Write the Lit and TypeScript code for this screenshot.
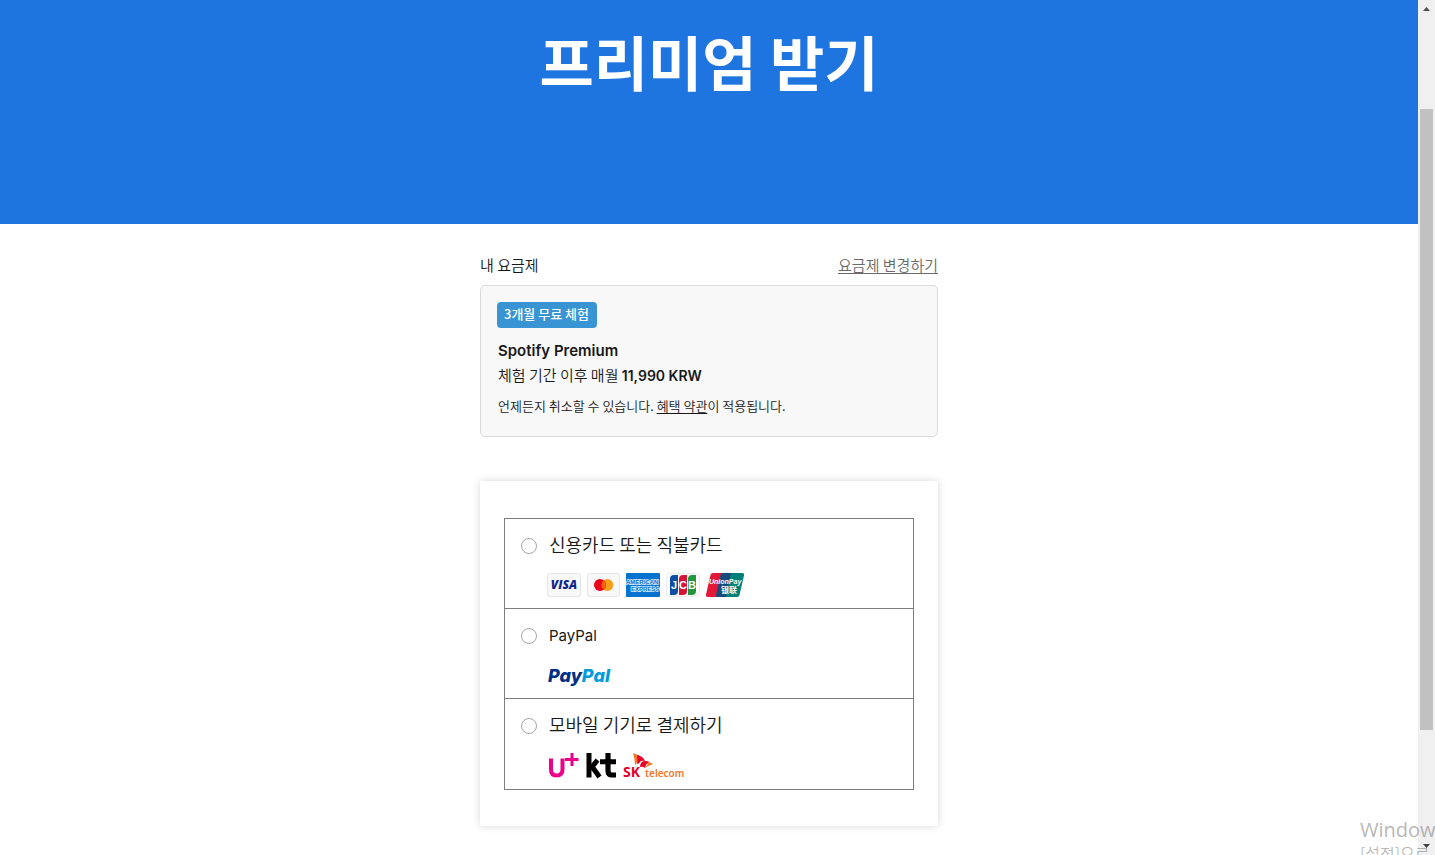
import { LitElement, html, css, svg } from "lit";
import { customElement, state } from "lit/decorators.js";

const visa = svg`<svg width="34" height="24" viewBox="0 0 34 24" role="img" aria-label="Visa">
  <rect x=".5" y=".5" width="33" height="23" rx="2" fill="#f8f8f9" stroke="#e6e6e8"/>
  <text x="17" y="16" text-anchor="middle" font-family="Open Sans, sans-serif" font-size="12" font-weight="800" font-style="italic" fill="#10268c">VISA</text>
</svg>`;

const mastercard = svg`<svg width="33" height="24" viewBox="0 0 33 24" role="img" aria-label="Mastercard">
  <rect x=".5" y=".5" width="32" height="23" rx="2" fill="#f8f8f9" stroke="#e6e6e8"/>
  <circle cx="20.300" cy="12" r="6" fill="#f9a01b"/>
  <circle cx="13" cy="12" r="6" fill="#eb001b"/>
  <path d="M16.650 7.250a6 6 0 0 1 0 9.500a6 6 0 0 1 0-9.500z" fill="#ff5f00"/>
</svg>`;

const amex = svg`<svg width="34" height="24" viewBox="0 0 34 24" role="img" aria-label="American Express">
  <rect width="34" height="24" rx="1" fill="#0672cf"/>
  <g font-family="Liberation Sans, sans-serif" font-weight="700" font-size="6" fill="#0672cf" stroke="#d9eafa" stroke-width="1.500" paint-order="stroke">
    <text x="0" y="11">AMERICAN</text>
    <text x="5" y="18">EXPRESS</text>
  </g>
</svg>`;

const jcb = svg`<svg width="34" height="24" viewBox="0 0 34 24" role="img" aria-label="JCB">
  <rect x=".5" y=".5" width="33" height="23" rx="2" fill="#fbfbfb" stroke="#ececee"/>
  <path d="M8 2h4v16q0 4-4 4H4V6q0-4 4-4z" fill="#0b4ea2"/>
  <path d="M17 2h4v16q0 4-4 4h-4V6q0-4 4-4z" fill="#d7133a"/>
  <path d="M26 2h4v16q0 4-4 4h-4V6q0-4 4-4z" fill="#22963c"/>
  <g font-family="Liberation Sans, sans-serif" font-size="11" font-weight="700" fill="#fff">
    <text x="5" y="16">J</text><text x="13" y="16">C</text><text x="22" y="16">B</text>
  </g>
</svg>`;

const unionPay = svg`<svg width="38" height="24" viewBox="0 0 38 24" role="img" aria-label="UnionPay">
  <path d="M7 0h11l-5 24H2q-2.500 0-2-2.500L4.500 2Q5 0 7 0z" fill="#e21836"/>
  <path d="M17 0h11l-5 24H11q-1.500 0-1-2.500L14.500 2Q15 0 17 0z" fill="#1a4a7c"/>
  <path d="M27 0h9q2.500 0 2 2.500L33.500 22q-.5 2-2.500 2H21q-1.500 0-1-2.500L24.500 2Q25 0 27 0z" fill="#018078"/>
  <text x="3" y="11" font-family="Liberation Sans, sans-serif" font-size="7" font-weight="700" font-style="italic" fill="#fff">UnionPay</text>
  <text x="15" y="20" font-family="Noto Sans CJK SC, sans-serif" font-size="8" font-weight="700" fill="#fff">银联</text>
</svg>`;

const payPal = svg`<svg width="66" height="26" viewBox="0 0 66 26" role="img" aria-label="PayPal">
  <text x="1" y="20" font-family="Inter, sans-serif" font-size="18" font-weight="800" font-style="italic" fill="#002f86">Pay<tspan fill="#009cde">Pal</tspan></text>
</svg>`;

const uPlus = svg`<svg width="32" height="26" viewBox="0 0 32 26" role="img" aria-label="U+">
  <path d="M4 5.500v11q0 6 5.700 6T15.500 16.500V5.500" fill="none" stroke="#ec008c" stroke-width="4"/>
  <path d="M25 0v13M18 6.500h13.500" fill="none" stroke="#ec008c" stroke-width="3"/>
</svg>`;

const kt = svg`<svg width="31" height="26" viewBox="0 0 31 26" role="img" aria-label="kt">
  <path d="M4 0v24.500" fill="none" stroke="#000" stroke-width="5"/>
  <path d="M5 14.500h1.500l6-7.500M7 13.500l7.500 10.500M15 8.800h16" fill="none" stroke="#000" stroke-width="5"/>
  <path d="M23 0v17.500q0 4.500 4 4.500h4" fill="none" stroke="#000" stroke-width="5.200"/>
</svg>`;

const skTelecom = svg`<svg width="66" height="26" viewBox="0 0 66 26" role="img" aria-label="SK telecom">
  <path d="M11 0q5 1.500 7 3.500-1 3-5 9Q13 6 11 0z" fill="#f47725"/>
  <path d="M15 2q6 1 8 6-4-1-5 1t-3 2q1-4 0-9z" fill="#e4002b"/>
  <path d="M18 14q0-5 4-6 4 0 6 1-3 1-4 3t-1 3q-2-2-5-1z" fill="#e4002b"/>
  <path d="M26 9q3 .5 5 2-5 2-10 5 5-3 5-7z" fill="#f47725"/>
  <text x="1" y="24" font-family="Open Sans, sans-serif" font-size="14" font-weight="700" fill="#e4002b">SK</text>
  <text x="23" y="24" font-family="Noto Sans, sans-serif" font-size="10" font-weight="600" fill="#f47725">telecom</text>
</svg>`;

const METHODS = [
  { id: "card", label: "신용카드 또는 직불카드", logos: [visa, mastercard, amex, jcb, unionPay], kind: "cards" },
  { id: "paypal", label: "PayPal", logos: [payPal], kind: "wallet" },
  { id: "mobile", label: "모바일 기기로 결제하기", logos: [uPlus, kt, skTelecom], kind: "carriers" },
];

@customElement("plan-summary")
class PlanSummary extends LitElement {
  static styles = css`
    :host { display: block; color: #181818; }
    .top { display: flex; justify-content: space-between; font-size: 15px; line-height: 24px; padding-bottom: 8px; }
    .title { margin: 0; font-size: 15px; font-weight: inherit; }
    .change { color: #6a6a6a; text-underline-offset: 2px; }
    .box { border: 1px solid #d9dadc; border-radius: 5px; background: #f8f8f8; padding: 16px 16px 20px; }
    .badge { display: inline-block; padding: 0 8px 2px 7px; border-radius: 4px; background: #3894d3; color: #fff; font-size: 13px; font-weight: 500; line-height: 24px; vertical-align: top; }
    .name { margin: 10px 0 0; font-family: "Inter", sans-serif; font-size: 15px; line-height: 25px; font-weight: 600; }
    .name, .price, .terms { padding-left: 1px; }
    .price, .terms { margin: 0; }
    .price { font-size: 15px; line-height: 24px; }
    .amount { font-family: "Inter", sans-serif; font-size: 14px; font-weight: 600; }
    .terms { padding-top: 8px; font-size: 13px; line-height: 20px; }
    .terms-link { color: inherit; text-underline-offset: 2px; }
  `;

  render() {
    return html`
      <div class="top">
        <h2 class="title">내 요금제</h2>
        <a class="change" href="#plans">요금제 변경하기</a>
      </div>
      <div class="box">
        <span class="badge">3개월 무료 체험</span>
        <h3 class="name">Spotify Premium</h3>
        <p class="price">체험 기간 이후 매월 <b class="amount">11,990 KRW</b></p>
        <p class="terms">언제든지 취소할 수 있습니다. <a class="terms-link" href="#terms">혜택 약관</a>이 적용됩니다.</p>
      </div>
    `;
  }
}

@customElement("payment-methods")
class PaymentMethods extends LitElement {
  @state() selected = "";

  static styles = css`
    :host { display: block; background: #fff; box-shadow: 0 0 8px rgba(0, 0, 0, 0.16); padding: 37px 24px 36px; color: #181818; }
    .list { margin: 0; padding: 0; border: 1px solid #7d7d7d; }
    .method { display: grid; grid-template-columns: 16px 1fr; column-gap: 12px; padding: 12px 16px 11px; }
    .method + .method { border-top: 1px solid #7d7d7d; }
    .radio { appearance: none; box-sizing: border-box; width: 16px; height: 16px; margin: 7px 0 0; border: 1px solid #a6a6a6; border-radius: 50%; background: #fff; }
    .radio:checked { border: 5px solid #1e75e0; }
    .label { font-size: 18px; line-height: 26px; }
    .wallet .label { padding-top: 3px; font-family: "Inter", sans-serif; font-size: 15px; font-weight: 400; line-height: 23px; }
    .logos { grid-column: 2; display: flex; align-items: center; height: 24px; margin-top: 16px; margin-left: -2px; }
    .cards .logos, .carriers .logos { gap: 6px; }
    .carriers .logos { height: 26px; }
    .carriers { padding-bottom: 10px; }
  `;

  render() {
    return html`
      <div class="list" role="radiogroup" aria-label="결제 수단">
        ${METHODS.map((m) => html`
          <div class="method ${m.kind}">
            <input class="radio" type="radio" name="method" id=${m.id}
              .checked=${this.selected === m.id} @change=${() => (this.selected = m.id)}>
            <label class="label" for=${m.id}>${m.label}</label>
            <div class="logos">${m.logos}</div>
          </div>`)}
      </div>
    `;
  }
}

@customElement("app-root")
class AppRoot extends LitElement {
  static styles = css`
    :host { display: grid; grid-template-columns: minmax(0, 1fr) 17px; position: relative; height: 100vh; overflow: hidden; background: #fff; font-family: "Noto Sans CJK KR", sans-serif; font-weight: 350; }
    .page { min-width: 0; overflow: hidden; }
    .hero { background: #1e75e0; color: #fff; text-align: center; padding: 16px 16px 118px; }
    .heading { margin: 0; font-size: 59px; line-height: 90px; font-weight: 700; }
    .content { max-width: 458px; margin: 0 auto; padding-top: 29px; }
    .payment { margin-top: 44px; }
    .scrollbar { display: flex; flex-direction: column; align-items: center; background: #f0f0f0; }
    .arrow { flex: none; width: 17px; height: 17px; }
    .track { flex: 1; display: flex; flex-direction: column; align-self: stretch; padding: 0 2px; }
    .before { flex: 92; }
    .thumb { flex: 621; background: #c1c1c1; }
    .after { flex: 108; }
    .watermark { position: absolute; right: 0; bottom: 0; width: 75px; height: 38px; overflow: hidden; white-space: nowrap; color: rgba(120, 120, 120, 0.55); pointer-events: none; }
    .wm-title { font-family: "Open Sans", sans-serif; font-size: 20px; font-weight: 400; line-height: 26px; }
    .wm-text { font-size: 16px; line-height: 20px; }
  `;

  render() {
    return html`
      <main class="page">
        <header class="hero"><h1 class="heading">프리미엄 받기</h1></header>
        <div class="content">
          <plan-summary></plan-summary>
          <payment-methods class="payment"></payment-methods>
        </div>
      </main>
      <div class="scrollbar" aria-hidden="true">
        <svg class="arrow" viewBox="0 0 17 17"><path d="M5 11l3.500-4 3.500 4z" fill="#505050"/></svg>
        <div class="track"><div class="before"></div><div class="thumb"></div><div class="after"></div></div>
        <svg class="arrow" viewBox="0 0 17 17"><path d="M5 6l3.500 4 3.500-4z" fill="#404040"/></svg>
      </div>
      <div class="watermark">
        <div class="wm-title">Window</div>
        <div class="wm-text">[설정]으로</div>
      </div>
    `;
  }
}
